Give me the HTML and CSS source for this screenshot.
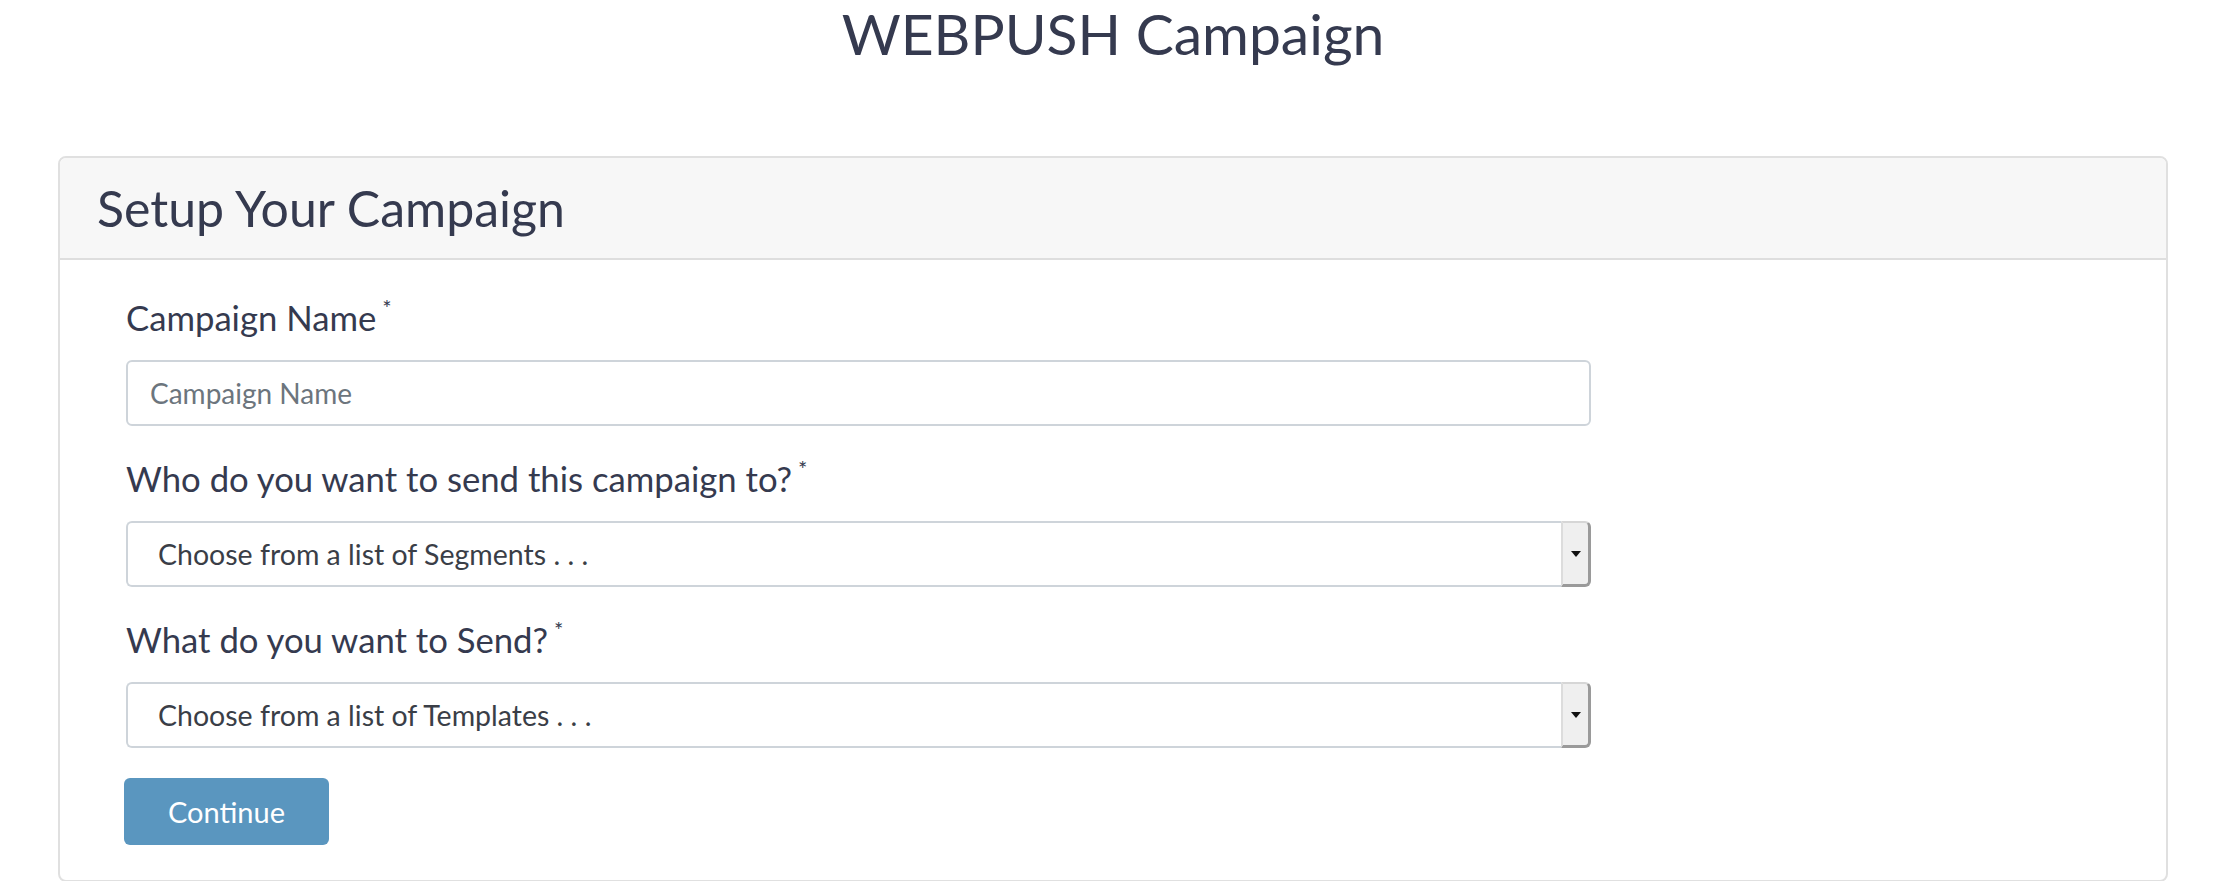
FILE: index.html
```html
<!DOCTYPE html>
<html lang="en">
<head>
<meta charset="utf-8">
<title>WEBPUSH Campaign</title>
<link rel="stylesheet" href="styles.css">
</head>
<body>
<h1 class="page-title">WEBPUSH Campaign</h1>
<div class="card">
  <div class="card-header">
    <h2 class="card-title">Setup Your Campaign</h2>
  </div>
  <div class="card-body">
    <form class="form">
      <div class="field">
        <label class="label">Campaign Name <sup class="req">*</sup></label>
        <input class="input" type="text" placeholder="Campaign Name">
      </div>
      <div class="field">
        <label class="label">Who do you want to send this campaign to? <sup class="req">*</sup></label>
        <div class="select">
          <span class="select-text">Choose from a list of Segments . . .</span>
          <span class="select-arrow"><span class="tri"></span></span>
        </div>
      </div>
      <div class="field">
        <label class="label">What do you want to Send? <sup class="req">*</sup></label>
        <div class="select">
          <span class="select-text">Choose from a list of Templates . . .</span>
          <span class="select-arrow"><span class="tri"></span></span>
        </div>
      </div>
      <button class="btn" type="button">Continue</button>
    </form>
  </div>
</div>
</body>
</html>
```

FILE: styles.css
```css
html, body {
  margin: 0;
  padding: 0;
  background: #ffffff;
}
body {
  font-family: Lato, "Liberation Sans", sans-serif;
  color: #353a4f;
}
.page-title {
  margin: -3px 0 0 0;
  text-align: center;
  font-weight: 400;
  font-size: 57px;
  line-height: 72px;
  color: #353a4f;
}
.card {
  margin: 87px 58px 0 58px;
  border: 2px solid #e0e0e0;
  border-radius: 8px;
  overflow: hidden;
}
.card-header {
  background: #f7f7f7;
  border-bottom: 2px solid #dedede;
  height: 100px;
  display: flex;
  align-items: center;
  padding-left: 37px;
}
.card-title {
  margin: 0;
  font-weight: 400;
  font-size: 50px;
  line-height: 60px;
  color: #353a4f;
}
.card-body {
  padding: 38px 0 35px 66px;
}
.form {
  width: 1465px;
  display: flex;
  flex-direction: column;
}
.field {
  display: flex;
  flex-direction: column;
  margin-bottom: 33px;
}
.label {
  font-size: 34.7px;
  line-height: 40px;
  margin-bottom: 22px;
  color: #353a4f;
}
.req {
  font-size: 22px;
  line-height: 0;
  vertical-align: baseline;
  position: relative;
  top: -15px;
  margin-left: -3px;
}
.input {
  box-sizing: border-box;
  height: 66px;
  border: 2px solid #ced4da;
  border-radius: 6px;
  padding: 0 0 0 22px;
  font-family: Lato, "Liberation Sans", sans-serif;
  font-size: 28px;
  color: #495057;
  outline: none;
}
.input::placeholder {
  color: #6c757d;
  opacity: 1;
}
.select {
  display: flex;
  height: 66px;
}
.select-text {
  flex: 1;
  display: flex;
  align-items: center;
  border: 2px solid #ced4da;
  border-right: 0;
  border-radius: 6px 0 0 6px;
  padding-left: 30px;
  font-size: 28.5px;
  color: #3a3e47;
}
.select-arrow {
  box-sizing: border-box;
  width: 30px;
  display: flex;
  align-items: center;
  justify-content: center;
  background: #efefef;
  border-top: 2px solid #d6d6d6;
  border-left: 2px solid #dcdcdc;
  border-right: 3px solid #9a9a9a;
  border-bottom: 3px solid #9a9a9a;
  border-radius: 0 6px 6px 0;
}
.tri {
  width: 0;
  height: 0;
  border-left: 5px solid transparent;
  border-right: 5px solid transparent;
  border-top: 6px solid #111;
}
.btn {
  align-self: flex-start;
  margin-top: -3px;
  margin-left: -2px;
  width: 205px;
  height: 67px;
  border: 0;
  border-radius: 6px;
  background: #5a96bf;
  color: #ffffff;
  font-family: Lato, "Liberation Sans", sans-serif;
  font-size: 29px;
  cursor: pointer;
}
```
